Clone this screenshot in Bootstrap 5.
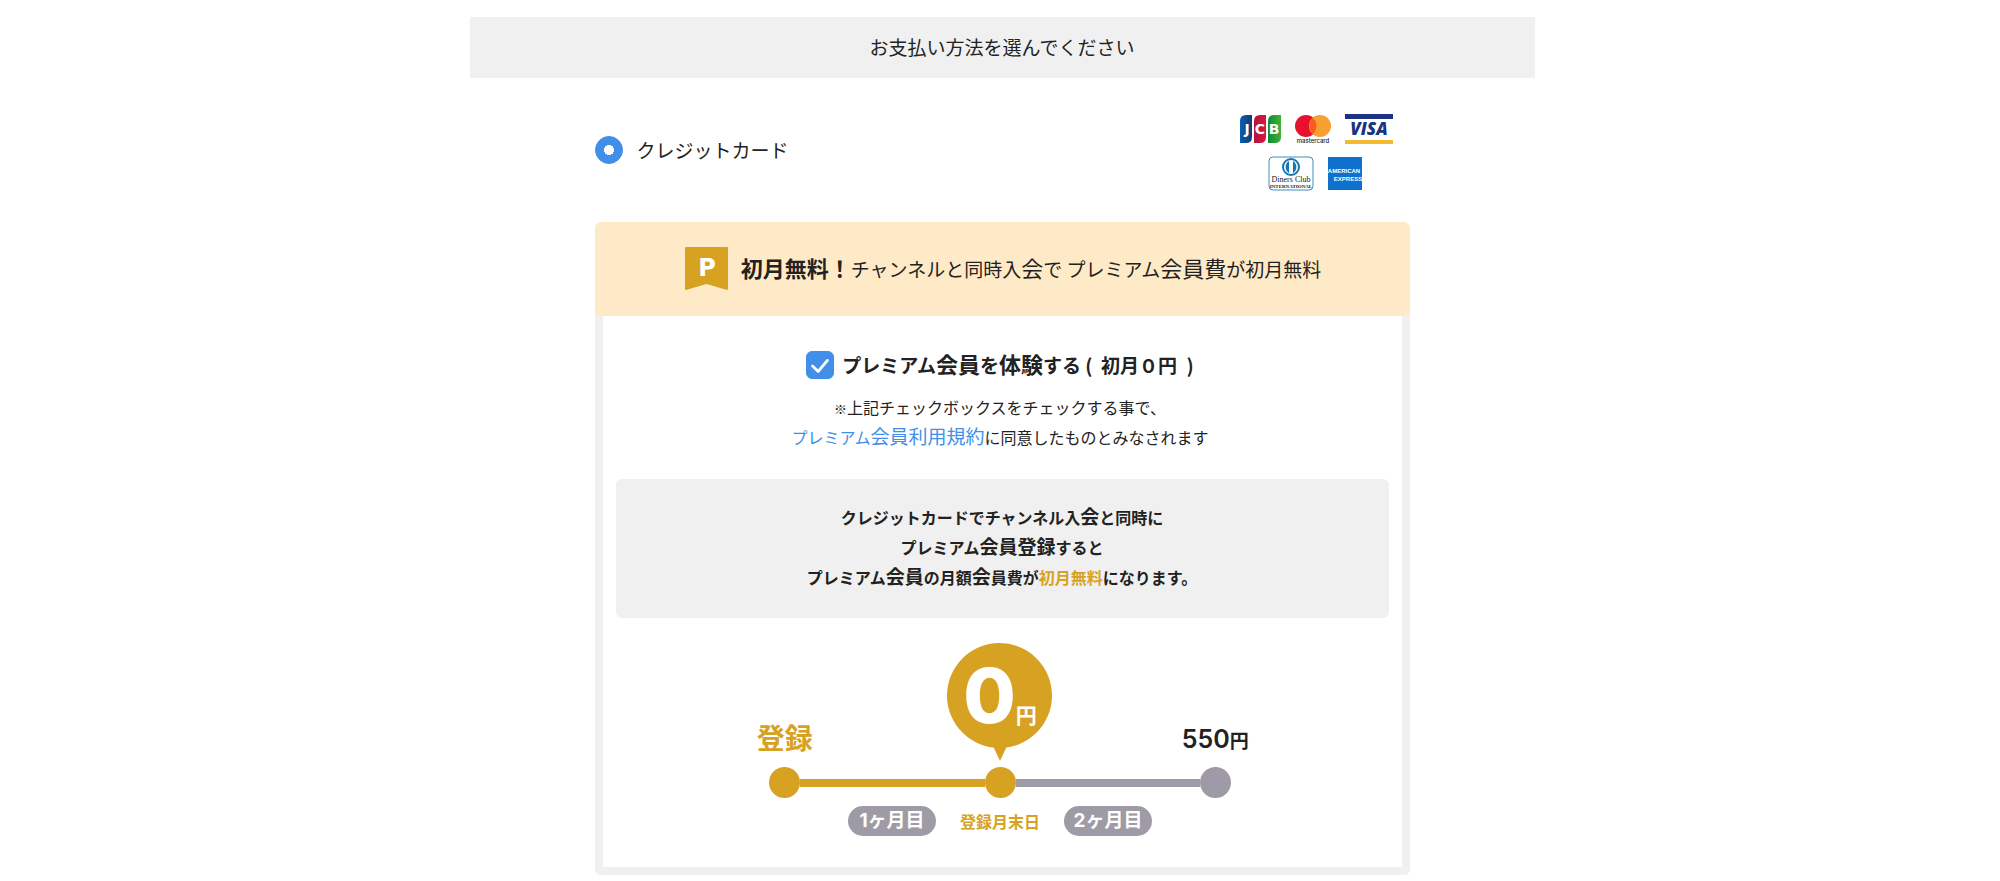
<!DOCTYPE html>
<html lang="ja">
<head>
<meta charset="utf-8">
<meta name="viewport" content="width=device-width, initial-scale=1">
<title>お支払い方法</title>
<link href="https://cdn.jsdelivr.net/npm/bootstrap@5.3.0/dist/css/bootstrap.min.css" rel="stylesheet">
<style>
  :root { --gold: #d7a222; --ash: #9e9ba7; --mist: #f0f0f0; --azure: #428fea; --ink: #222; }
  body { font-family: "Noto Sans CJK JP", sans-serif; font-size: 16px; line-height: 30px; color: var(--ink); background: #fff; }
  .page-wrap { max-width: 1069px; padding-top: 17px; }
  .pay-wrap { max-width: 815px; }
  .pay-heading { background: var(--mist); font-size: 19px; font-weight: 400; line-height: 29px; padding: 15px 0 17px; }
  .fs-main { font-size: 19px; }
  .fs-strong { font-size: 22px; }
  .fs-note { font-size: 13px; }
  span.fs-main, .fs-strong, .fs-note { line-height: 1; }
  .pay-method { min-height: 144px; }
  .pay-label { padding-left: 14px; }
  .form-check-input.pay-radio, .form-check-input.pay-check { width: 28px; height: 28px; margin: 0; flex: none; }
  .form-check-input:checked { background-color: var(--azure); border-color: var(--azure); }
  .pay-radio:checked[type=radio] { background-image: radial-gradient(circle, #fff 5px, transparent 5px); }
  .pay-check[type=checkbox] { border-radius: 6px; }
  .pay-check:checked[type=checkbox] { background-image: url("data:image/svg+xml,%3csvg xmlns='http://www.w3.org/2000/svg' viewBox='0 0 28 28'%3e%3cpath fill='none' stroke='%23fff' stroke-width='3' stroke-linecap='round' stroke-linejoin='round' d='M6 15l6 6L22 9'/%3e%3c/svg%3e"); }
  .brand-logos { width: 186px; padding-top: 6px; }
  .offer-card { border: 0; border-radius: 6px; color: var(--ink); }
  .offer-head { background: #ffeac7; border-radius: 6px 6px 0 0; padding: 25px 16px; }
  .offer-body { border: 8px solid var(--mist); border-top: 0; border-radius: 0 0 6px 6px; padding: 34px 13px 31px; }
  .offer-note { margin: 12px 0 27px; }
  .terms-link { color: var(--azure); font-size: 19px; line-height: 1; text-decoration: none; }
  .offer-info { background: var(--mist); border-radius: 6px; padding: 23px 16px 26px; margin-bottom: 25px; }
  .text-gold { color: var(--gold); }
  .time-plan { max-width: 646px; }
  .time-labels { display: grid; grid-template-columns: repeat(3, 1fr); justify-items: center; align-items: end; }
  .time-start { font-size: 28px; line-height: 36px; padding-bottom: 12px; }
  .time-price { font-size: 19px; padding-bottom: 12px; }
  .num { font-family: Inter, "Noto Sans CJK JP", sans-serif; }
  .time-price .num { font-size: 25px; font-weight: 600; line-height: 1; }
  .bubble { position: relative; width: 105px; height: 105px; margin-bottom: 19px; border-radius: 50%; background: var(--gold); color: #fff; font-size: 21px; line-height: 104px; }
  .bubble::after { content: ""; position: absolute; left: 46px; top: 103px; border: 7px solid transparent; border-top: 15px solid var(--gold); border-bottom: 0; }
  .bubble .num { font-size: 76px; font-weight: 800; line-height: 104px; }
  .time-track { max-width: 462px; }
  .dot { width: 31px; height: 31px; border-radius: 50%; background: var(--gold); flex: none; }
  .bar { height: 8px; background: var(--gold); }
  .dot.later, .bar.later { background: var(--ash); }
  .month-pill { background: var(--ash); color: #fff; width: 88px; font-size: 19px; border-radius: 15px; }
</style>
</head>
<body>
<main class="page-wrap mx-auto ps-1">
  <h1 class="pay-heading text-center mb-0">お支払い方法を選んでください</h1>
  <div class="pay-wrap mx-auto">
    <div class="pay-method d-flex align-items-center justify-content-between">
      <div class="d-flex align-items-center">
        <input class="form-check-input pay-radio" type="radio" name="method" id="card" checked>
        <label class="fs-main pay-label" for="card">クレジットカード</label>
      </div>
      <div class="brand-logos d-flex justify-content-center">
        <svg width="156" height="78" viewBox="0 0 156 78" role="img" aria-label="JCB mastercard VISA Diners Club American Express">
          <defs>
            <linearGradient id="jb"><stop stop-color="#0b5fae"/><stop offset="1" stop-color="#123a78"/></linearGradient>
            <linearGradient id="jr"><stop stop-color="#b0163c"/><stop offset="1" stop-color="#df1440"/></linearGradient>
            <linearGradient id="jg"><stop stop-color="#118a34"/><stop offset="1" stop-color="#41b236"/></linearGradient>
          </defs>
          <path d="M7 1h6v22q0 6-6 6H1V7q0-6 6-6z" fill="url(#jb)"/>
          <path d="M21 1h6v22q0 6-6 6h-6V7q0-6 6-6z" fill="url(#jr)"/>
          <path d="M35 1h7v22q0 6-6 6h-7V7q0-6 6-6z" fill="url(#jg)"/>
          <g fill="#fff" font-family="DejaVu Sans" font-weight="700" font-size="14" text-anchor="middle">
            <text x="8" y="20">J</text><text x="21" y="20">C</text><text x="35" y="20">B</text>
          </g>
          <circle cx="67" cy="12" r="11" fill="#e8112d"/>
          <circle cx="81" cy="12" r="11" fill="#f6a033"/>
          <path d="M74 4a11 11 0 0 1 0 16a11 11 0 0 1 0-16z" fill="#fb5b1e"/>
          <text x="74" y="29" text-anchor="middle" font-family="Inter" font-size="6" font-weight="500" fill="#222">mastercard</text>
          <path d="M106 0h48v5h-48z" fill="#1b3380"/><path d="M106 26h48v4h-48z" fill="#f5b932"/>
          <text x="130" y="21" text-anchor="middle" font-family="Open Sans" font-style="italic" font-weight="800" font-size="17" fill="#1b3380">VISA</text>
          <rect x="30" y="43" width="44" height="33" rx="4" fill="#fff" stroke="#3f90bd"/>
          <circle cx="52" cy="53" r="8" fill="#fff" stroke="#1676b5" stroke-width="2"/>
          <path d="M50 47a7 7 0 0 0 0 12zM54 47a7 7 0 0 1 0 12z" fill="#1676b5"/>
          <g text-anchor="middle" font-family="Liberation Serif" fill="#222"><text x="52" y="68" font-size="8">Diners Club</text><text x="52" y="74" font-size="5" font-weight="700">INTERNATIONAL</text></g>
          <path d="M89 43h34v33H89z" fill="#1070ce"/>
          <g text-anchor="middle" font-family="Liberation Sans" font-weight="700" font-size="6" fill="#fff"><text x="105" y="59">AMERICAN</text><text x="109" y="67">EXPRESS</text></g>
        </svg>
      </div>
    </div>

    <section class="card offer-card">
      <div class="offer-head d-flex align-items-center justify-content-center">
        <svg class="me-2 flex-shrink-0" width="50" height="44" viewBox="0 0 50 44" aria-hidden="true">
          <path d="M3 0h41q1 0 1 1v41q0 1-1 1L23.500 37 3 43q-1 0-1-1V1q0-1 1-1z" fill="#d7a222"/>
          <text x="24" y="29" text-anchor="middle" font-family="DejaVu Sans" font-weight="700" font-size="24" fill="#fff">P</text>
        </svg>
        <div class="fs-main"><strong class="fs-strong">初月無料！</strong>チャンネルと同時入<span class="fs-strong">会</span>で プレミアム<span class="fs-strong">会員費</span>が初月無料</div>
      </div>
      <div class="offer-body text-center">
        <div class="d-flex align-items-center justify-content-center pe-1">
          <input class="form-check-input pay-check" type="checkbox" id="trial" checked>
          <label class="fs-main fw-bold ps-2" for="trial">プレミアム<span class="fs-strong">会員</span>を<span class="fs-strong">体験</span>する&nbsp;(&nbsp; 初月０円&ensp;)</label>
        </div>
        <p class="offer-note pe-1"><span class="fs-note">※</span>上記チェックボックスをチェックする事で、<br><a class="terms-link" href="#"><span class="fs-6">プレミアム</span>会員利用規約</a>に同意したものとみなされます</p>
        <p class="offer-info fw-bold">クレジットカードでチャンネル入<span class="fs-main">会</span>と同時に<br>プレミアム<span class="fs-main">会員登録</span>すると<br>プレミアム<span class="fs-main">会員</span>の月額<span class="fs-main">会</span>員費が<span class="text-gold">初月無料</span>になります。</p>
        <div class="pe-1">
          <div class="time-plan mx-auto fw-bold">
            <div class="time-labels">
              <div class="time-start text-gold">登録</div>
              <div class="bubble"><span class="num">0</span>円</div>
              <div class="time-price"><span class="num">550</span>円</div>
            </div>
            <div class="time-track mx-auto d-flex align-items-center">
              <span class="dot"></span><span class="bar flex-fill"></span><span class="dot"></span><span class="bar later flex-fill"></span><span class="dot later"></span>
            </div>
            <div class="d-flex justify-content-center gap-4 mt-2">
              <span class="month-pill num">1ヶ月目</span>
              <span class="text-gold">登録月末日</span>
              <span class="month-pill num">2ヶ月目</span>
            </div>
          </div>
        </div>
      </div>
    </section>
  </div>
</main>
<script src="https://cdn.jsdelivr.net/npm/bootstrap@5.3.0/dist/js/bootstrap.bundle.min.js"></script>
</body>
</html>
